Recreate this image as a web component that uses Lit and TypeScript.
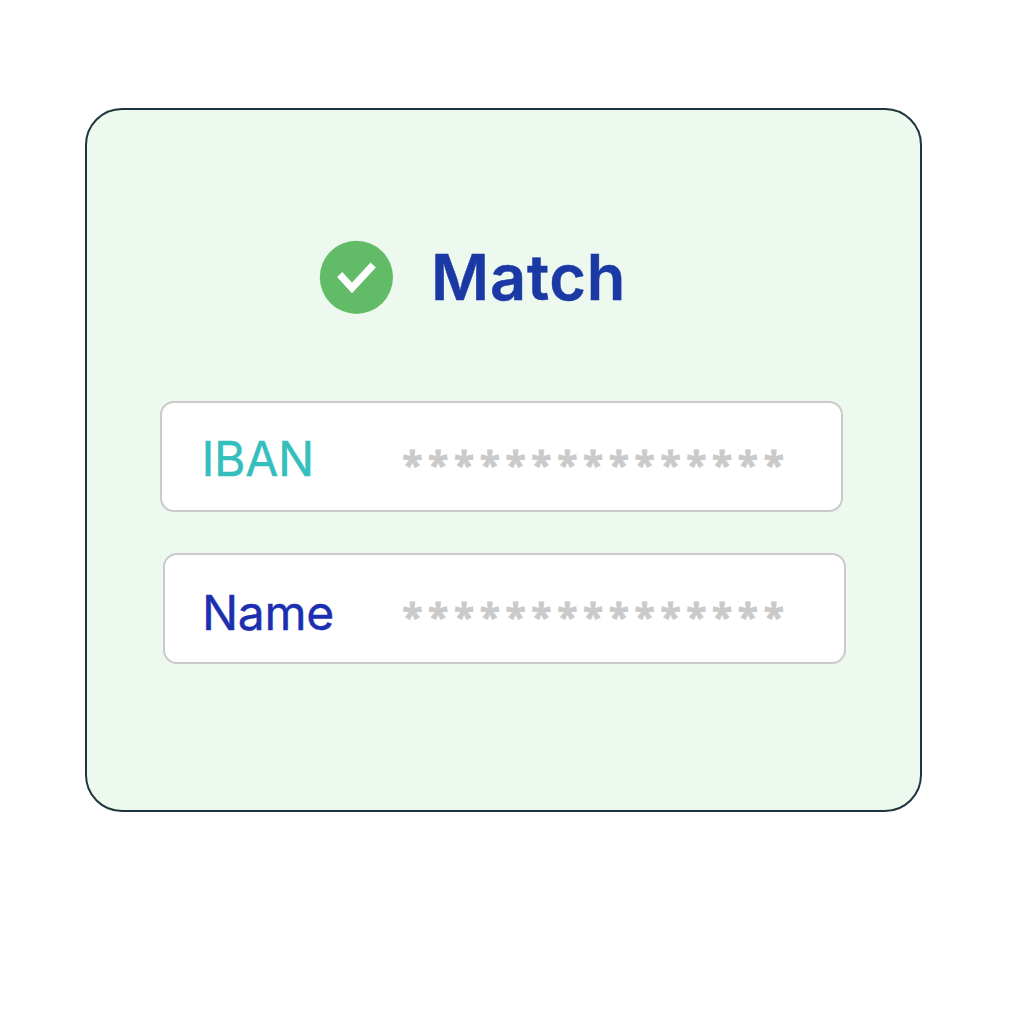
import { LitElement, html, css } from "lit";
import { customElement, property } from "lit/decorators.js";

@customElement("masked-field")
class MaskedField extends LitElement {
  @property() label = "";

  static styles = css`
    :host {
      display: flex;
      box-sizing: border-box;
      width: 683px;
      height: 111px;
      border: 2px solid #cacaca;
      border-radius: 14px;
      background: #fff;
      white-space: nowrap;
    }
    .label {
      box-sizing: border-box;
      width: var(--label-width, 240.3px);
      padding-left: var(--label-inset, 39.5px);
      padding-top: var(--label-top, 27px);
      font: 400 48px/58px Inter, sans-serif;
      letter-spacing: -0.3px;
      color: var(--label-color);
      -webkit-text-stroke: 0.4px var(--label-color);
    }
    .mask {
      padding-top: 32px;
      font: 700 37px/60px "Open Sans", sans-serif;
      letter-spacing: 5.65px;
      color: #cacaca;
      -webkit-text-stroke: 0.8px #cacaca;
    }
  `;

  render() {
    return html`<span class="label">${this.label}</span
      ><span class="mask">${"*".repeat(15)}</span>`;
  }
}

@customElement("app-root")
class AppRoot extends LitElement {
  static styles = css`
    :host {
      display: flex;
      box-sizing: border-box;
      width: 1011px;
      height: 1011px;
      padding: 108px 0 0 85px;
      background: #fff;
    }
    .card {
      display: flex;
      flex-direction: column;
      box-sizing: border-box;
      width: 837px;
      height: 704px;
      padding: 130px 73px 0;
      border: 2px solid #1f353e;
      border-radius: 37px;
      background: #edf8ef;
    }
    .status {
      display: flex;
      height: 76px;
      margin-bottom: 85px;
      padding-left: 159px;
      gap: 38px;
    }
    .check {
      display: block;
      flex: none;
      width: 74px;
      height: 74px;
    }
    .title {
      font: 600 63px/74px Inter, sans-serif;
      letter-spacing: 0.8px;
      color: #1b39a5;
      -webkit-text-stroke: 0.5px #1b39a5;
    }
    .iban {
      --label-color: #34bebe;
    }
    .name {
      --label-color: #1d2fb1;
      --label-inset: 37px;
      --label-top: 29px;
      --label-width: 237.3px;
      margin: 41px 0 0 3px;
    }
  `;

  render() {
    return html`
      <section class="card">
        <div class="status">
          <svg class="check" viewBox="0 0 74 74" aria-hidden="true">
            <circle cx="37.4" cy="37.3" r="36.6" fill="#62bb66" />
            <path d="M20.7 34.5 L33 48 L54.2 25" fill="none" stroke="#fff" stroke-width="7.2" />
          </svg>
          <span class="title">Match</span>
        </div>
        <masked-field class="iban" label="IBAN"></masked-field>
        <masked-field class="name" label="Name"></masked-field>
      </section>
    `;
  }
}
